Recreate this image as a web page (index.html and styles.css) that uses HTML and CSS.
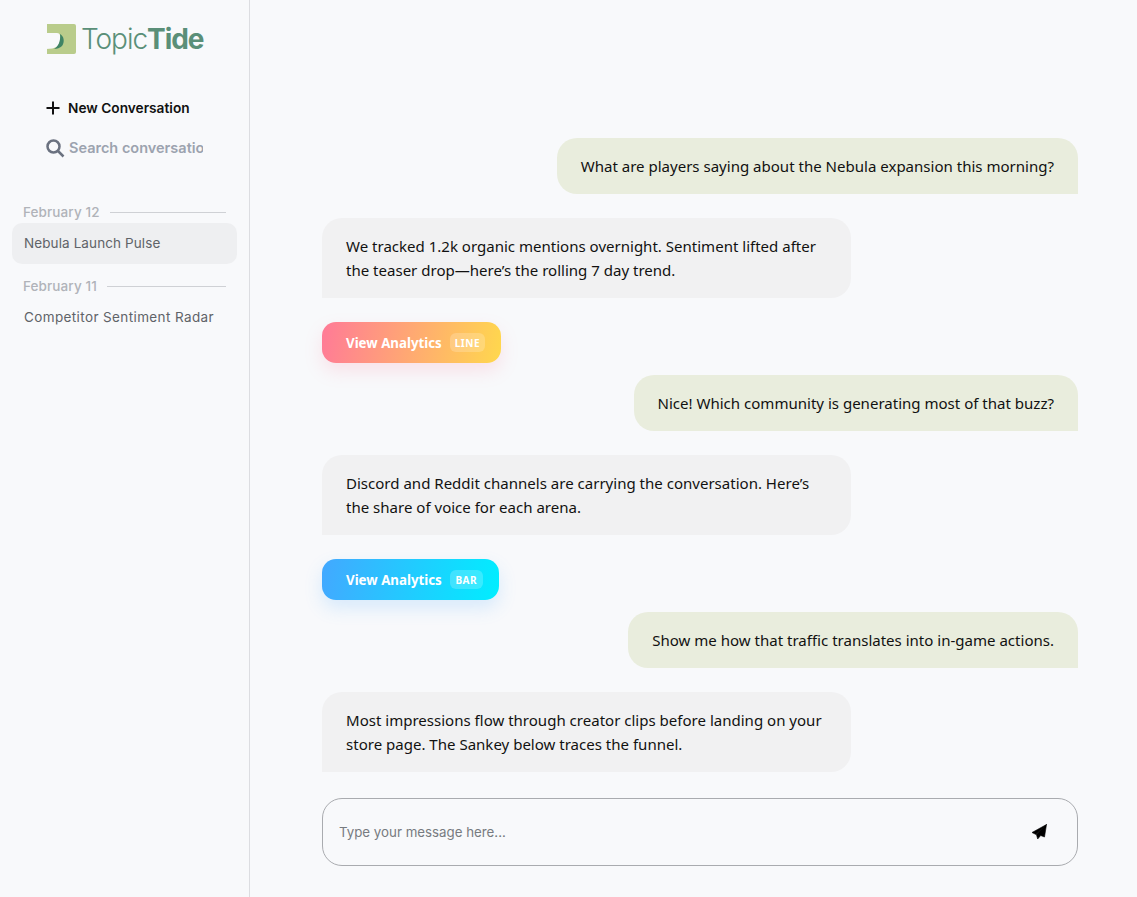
FILE: index.html
```html
<!DOCTYPE html>
<html lang="en">
<head>
<meta charset="utf-8">
<title>TopicTide</title>
<link rel="stylesheet" href="styles.css">
</head>
<body>
<div class="app">
  <aside class="sidebar">
    <div class="logo">
      <svg class="logo-mark" width="30" height="30" viewBox="0 0 30 30"><path fill="#b9cc8b" d="M1 0h27a2 2 0 0 1 2 2v26a2 2 0 0 1-2 2H1z"/><path fill="#f8f9fb" d="M0 9h11c3 0 4 3 3 8-1 5-4 8-14 8z"/><path fill="#3f8465" d="M14 10c4 2 5 8 2 12-2 2-5 3-8 3 4-2 7-8 6-15z"/></svg>
      <span class="logo-text">Topic<b>Tide</b></span>
    </div>
    <button class="new-btn"><svg width="16" height="16" viewBox="0 0 16 16"><path d="M8 1.500v13M1.500 8h13" stroke="#111" stroke-width="2"/></svg><span>New Conversation</span></button>
    <div class="search">
      <svg width="20" height="20" viewBox="0 0 20 20" fill="none" stroke="#6b7280" stroke-width="2.500"><circle cx="8.500" cy="8.500" r="6"/><path d="M13 13l5.500 5.500"/></svg>
      <input class="search-input" placeholder="Search conversations" aria-label="Search">
    </div>
    <div class="group">
      <div class="date"><span>February 12</span><i></i></div>
      <div class="conv active">Nebula Launch Pulse</div>
      <div class="date"><span>February 11</span><i></i></div>
      <div class="conv wide">Competitor Sentiment Radar</div>
    </div>
  </aside>
  <main class="main">
    <div class="thread">
      <div class="msg user">What are players saying about the Nebula expansion this morning?</div>
      <div class="msg bot">We tracked 1.2k organic mentions overnight. Sentiment lifted after the teaser drop—here’s the rolling 7 day trend.</div>
      <button class="cta line">View Analytics <span class="tag">LINE</span></button>
      <div class="msg user">Nice! Which community is generating most of that buzz?</div>
      <div class="msg bot">Discord and Reddit channels are carrying the conversation. Here’s the share of voice for each arena.</div>
      <button class="cta bar">View Analytics <span class="tag">BAR</span></button>
      <div class="msg user">Show me how that traffic translates into in-game actions.</div>
      <div class="msg bot">Most impressions flow through creator clips before landing on your store page. The Sankey below traces the funnel.</div>
    </div>
    <div class="composer">
      <input class="composer-input" placeholder="Type your message here..." aria-label="Message">
      <svg class="send" width="16" height="16" viewBox="0 0 16 16"><path fill="#000" stroke="#000" stroke-width=".6" d="M15.500.5 13.500 13l-3.800-1.500-3 3.500-1.300-4.500zM15.500.5 5 10.500 1 8.500z"/></svg>
    </div>
  </main>
</div>
</body>
</html>
```
FILE: styles.css
```css
* { box-sizing: border-box; }
html, body { margin: 0; height: 100%; }
body { background: #f8f9fb; font-family: "Inter", "Liberation Sans", sans-serif; color: #111; overflow: hidden; }
.app { display: flex; height: 897px; }
.sidebar { width: 250px; flex: none; border-right: 1px solid #dcdde1; padding: 22px 12px 0; }
.logo { display: flex; align-items: center; gap: 5px; padding-left: 34px; height: 33px; }
.logo-mark { flex: none; }
.logo-text { font-family: "Inter", sans-serif; font-size: 28px; letter-spacing: -1.050px; color: #5a8f78; font-weight: 300; }
.logo-text b { font-weight: 700; }
.new-btn { display: flex; align-items: center; gap: 7px; margin: 42px 0 0 33px; padding: 0; border: 0; background: none; font: 600 13.700px "Inter", sans-serif; color: #111; height: 22px; }
.search { display: flex; align-items: center; gap: 4px; margin: 18px 0 0 33px; width: 158px; height: 21px; }
.search svg { flex: none; }
.search-input { border: 0; background: none; outline: 0; width: 134px; padding: 0; font: 600 14.500px "Inter", sans-serif; }
.search-input::placeholder { color: #9ca3af; opacity: 1; }
.group { margin-top: 44px; }
.date { display: flex; align-items: center; gap: 10px; margin: 0 11px; height: 20px; font-size: 13.500px; letter-spacing: .1px; color: #b0b3b9; font-weight: 500; }
.date i { flex: 1; height: 1px; background: #cfd1d5; }
.conv { display: flex; align-items: center; padding: 0 12px 1px; height: 41px; border-radius: 10px; font-size: 13.500px; letter-spacing: .1px; color: #5f6368; white-space: nowrap; margin-top: 1px; }
.conv.wide { letter-spacing: .38px; }
.conv.active { background: #eeeff1; margin-bottom: 12px; }
.main { flex: 1; display: flex; flex-direction: column; padding: 138px 59px 0 72px; }
.thread { display: flex; flex-direction: column; gap: 24px; align-items: flex-start; height: 660px; }
.msg { font-family: "Noto Sans", sans-serif; font-size: 15.040px; line-height: 24px; padding: 16px 24px; color: #111; }
.user { align-self: flex-end; background: #e9eddd; border-radius: 20px 20px 0 20px; }
.bot { width: 529px; background: #f1f1f2; border-radius: 20px 20px 20px 0; }
.cta { display: flex; align-items: center; gap: 8px; height: 41px; margin-bottom: -12px; padding: 0 16px 0 24px; border: 0; border-radius: 14px; color: #fff; font: 700 13.300px "Noto Sans", sans-serif; }
.cta.line { background: linear-gradient(100deg, #ff7a97, #ffd84d); box-shadow: 0 8px 18px rgba(255, 122, 151, .18); }
.cta.bar { background: linear-gradient(100deg, #43a8ff, #00eeff); box-shadow: 0 8px 18px rgba(67, 168, 255, .18); }
.tag { display: inline-flex; align-items: center; justify-content: center; min-width: 33px; height: 19px; padding: 0 5px; border-radius: 6px; background: rgba(255, 255, 255, .2); font-size: 10px; letter-spacing: .5px; }
.composer { display: flex; align-items: center; height: 68px; border: 1px solid #a9abaf; border-radius: 20px; padding: 0 30px 0 16px; }
.composer-input { flex: 1; border: 0; outline: 0; background: none; padding: 0; font: 400 13.300px "Inter", sans-serif; }
.composer-input::placeholder { color: #777b80; opacity: 1; }
.send { flex: none; }
```
